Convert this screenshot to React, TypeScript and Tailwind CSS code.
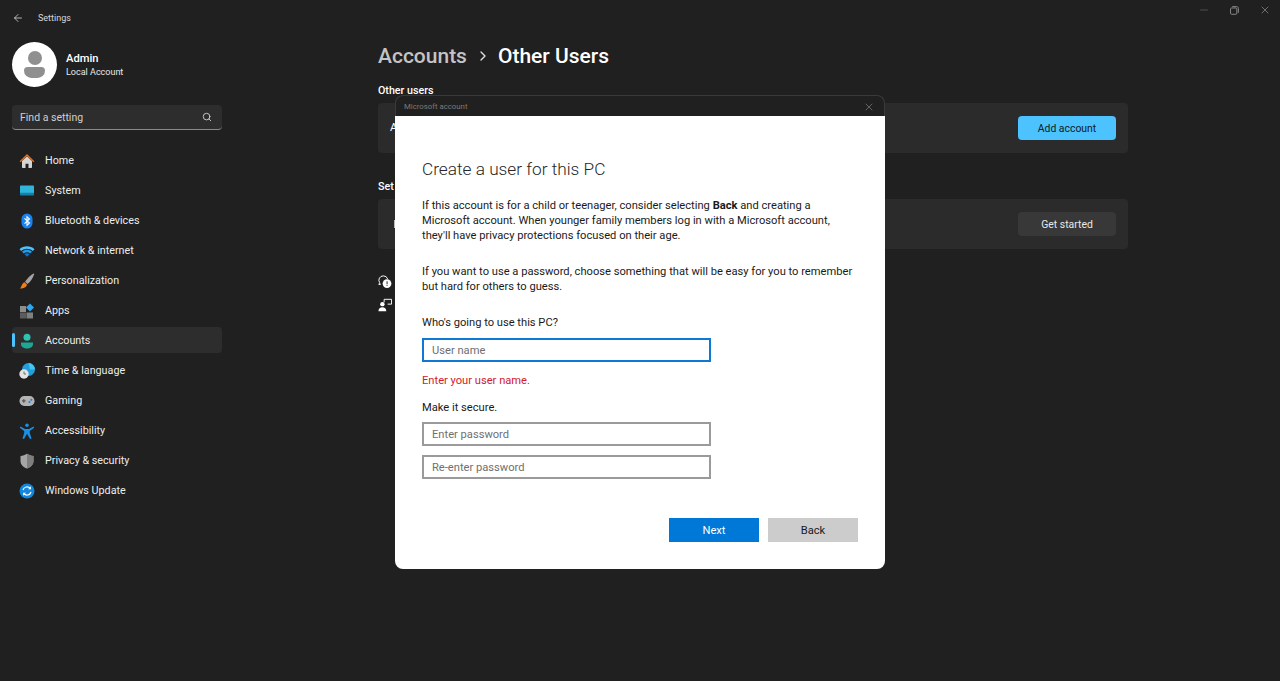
import { ArrowLeft, ChevronRight, Minus, Search, X } from "lucide-react";

function HomeIcon() {
  return (
    <svg viewBox="0 0 16 16" className="h-4 w-4">
      <path d="M3 8v6.200c0 .4.3.8.8.8h2.700v-4.200h3V15h2.700c.5 0 .8-.4.8-.8V8L8 3.200z" fill="#d5d5d5" />
      <path d="M.6 8.300 8 1l7.400 7.300-1 1L8 3 1.600 9.300z" fill="#e0701c" />
    </svg>
  );
}

function SystemIcon() {
  return (
    <svg viewBox="0 0 16 16" className="h-4 w-4">
      <rect x="1" y="2.500" width="14" height="9" rx="0.800" fill="#2fb4dc" />
      <path d="M1 9.800h14v1.700c0 .6-.4 1-1 1H2c-.6 0-1-.4-1-1z" fill="#1a7fa8" />
    </svg>
  );
}

function BluetoothIcon() {
  return (
    <svg viewBox="0 0 16 16" className="h-4 w-4">
      <rect x="2.500" y="0.500" width="11" height="15" rx="5.500" fill="#1683f0" />
      <path d="m5.500 5.300 5 4.700L8 12.300V3.700l2.500 2.300-5 4.700" fill="none" stroke="#fff" strokeWidth="1.100" />
    </svg>
  );
}

function NetworkIcon() {
  return (
    <svg viewBox="0 0 16 16" className="h-4 w-4">
      <path d="M.5 6.200C4.600 2.400 11.400 2.400 15.500 6.200L13.800 8C10.500 5 5.500 5 2.200 8z" fill="#4cc2ff" />
      <path d="M3 8.700c2.800-2.500 7.200-2.500 10 0l-1.800 1.800c-1.800-1.600-4.600-1.600-6.400 0z" fill="#1f9be8" />
      <path d="M5.500 11.200c1.400-1.200 3.600-1.200 5 0L8 13.800z" fill="#0f74c9" />
    </svg>
  );
}

function BrushIcon() {
  return (
    <svg viewBox="0 0 16 16" className="h-4 w-4">
      <path d="M14.500.5c.5 0 .8.400.6.900C13.800 5 11.300 9 8.500 11L6 8.800C8 5.800 11.500 2 14.500.5z" fill="#a3a3a3" />
      <path d="M5.500 9.300 8 11.500c-.4 2.700-3.300 4-7 4 1.700-1.300 1.300-4.800 4.500-6.200z" fill="#ef7d1a" />
    </svg>
  );
}

function AppsIcon() {
  return (
    <svg viewBox="0 0 16 16" className="h-4 w-4">
      <rect x="1" y="3" width="6" height="6" fill="#8d8d8d" />
      <rect x="1" y="9.500" width="6" height="6" fill="#5c5c5c" />
      <rect x="7.500" y="9.500" width="6.500" height="6" fill="#808080" />
      <path d="m11 .5 4 4-4 4-4-4z" fill="#2ea6f0" />
    </svg>
  );
}

function AccountsIcon() {
  return (
    <svg viewBox="0 0 16 16" className="h-4 w-4">
      <circle cx="8" cy="4.200" r="3.500" fill="#2cc4b0" />
      <path d="M2 9.500h12v1.500c0 3-3 4.500-6 4.500S2 14 2 11z" fill="#1da896" />
    </svg>
  );
}

function TimeIcon() {
  return (
    <svg viewBox="0 0 16 16" className="h-4 w-4">
      <circle cx="9.500" cy="6.500" r="6.500" fill="#1f9fe0" />
      <path d="M9.500 0a6.500 6.500 0 0 1 6.500 6.500h-5z" fill="#47c4f0" />
      <circle cx="5" cy="11" r="4.700" fill="#e2e2e2" />
      <path d="M5 8.500V11h2" fill="none" stroke="#555" strokeWidth="0.800" />
    </svg>
  );
}

function GamingIcon() {
  return (
    <svg viewBox="0 0 16 16" className="h-4 w-4">
      <rect x="0.500" y="3" width="15" height="10" rx="4.800" fill="#b4b4b4" />
      <rect x="3" y="7.300" width="3.600" height="1.200" fill="#555" />
      <rect x="4.200" y="6.100" width="1.200" height="3.600" fill="#555" />
      <circle cx="10.500" cy="9" r="1.100" fill="#1f86dc" />
      <circle cx="12.300" cy="6.800" r="1.100" fill="#1f86dc" />
    </svg>
  );
}

function AccessibilityIcon() {
  return (
    <svg viewBox="0 0 16 16" className="h-4 w-4">
      <circle cx="8" cy="2.300" r="1.800" fill="#1a8fe3" />
      <path d="M1.500 3.500 6 6h4l4.500-2.500.7 1.200L10.800 8v2l1.700 5.500-1.500.5L8 10.800 5 16l-1.500-.5L5.200 10V8L.8 4.700z" fill="#1a8fe3" />
    </svg>
  );
}

function PrivacyIcon() {
  return (
    <svg viewBox="0 0 16 16" className="h-4 w-4">
      <path d="M8 .7c2 1.300 4 2 6.500 2.200V8c0 3.600-2.500 6-6.500 7.500C4 14 1.500 11.600 1.500 8V2.900C4 2.700 6 2 8 .7z" fill="#a6a6a6" />
      <path d="M8 .7c2 1.300 4 2 6.500 2.200V8c0 3.600-2.500 6-6.500 7.500z" fill="#7e7e7e" />
    </svg>
  );
}

function UpdateIcon() {
  return (
    <svg viewBox="0 0 16 16" className="h-4 w-4">
      <circle cx="8" cy="8" r="7.500" fill="#1287e0" />
      <path d="M4 7a4.200 4.200 0 0 1 7.300-1.500M12 9a4.200 4.200 0 0 1-7.300 1.500" fill="none" stroke="#fff" strokeWidth="1.200" />
      <path d="M12 3.300v3h-3zM4 12.700v-3h3z" fill="#fff" />
    </svg>
  );
}

function HelpIcon() {
  return (
    <svg viewBox="0 0 16 16" className="h-[14px] w-[14px]">
      <path d="M6 1a5 5 0 0 0-4.200 7.700L1 11l2.400-.7" fill="none" stroke="#fff" strokeWidth="1.100" />
      <path d="M6 1a5 5 0 0 1 5 3.500" fill="none" stroke="#fff" strokeWidth="1.100" />
      <circle cx="10.300" cy="9.800" r="5" fill="#fff" />
      <rect x="9.800" y="7.200" width="1.100" height="3.300" fill="#202020" />
      <rect x="9.800" y="11.300" width="1.100" height="1.100" fill="#202020" />
    </svg>
  );
}

function FeedbackIcon() {
  return (
    <svg viewBox="0 0 16 16" className="h-[14px] w-[14px]">
      <circle cx="5" cy="7" r="2.500" fill="#fff" />
      <path d="M0.500 15c0-3 2-4.500 4.500-4.500S9.500 12 9.500 15z" fill="#fff" />
      <path d="M7 5V1.500h8.500V7H11" fill="none" stroke="#fff" strokeWidth="1.100" />
    </svg>
  );
}

function RestoreIcon() {
  return (
    <svg viewBox="0 0 10 10" className="h-[9px] w-[9px]">
      <rect x="0.600" y="2.200" width="7" height="7" rx="1.200" fill="none" stroke="#8a8a8a" strokeWidth="1.100" />
      <path d="M2.500.7h5c1 0 1.800.8 1.800 1.800v5" fill="none" stroke="#8a8a8a" strokeWidth="1.100" />
    </svg>
  );
}

const navItems = [
  { label: "Home", icon: <HomeIcon /> },
  { label: "System", icon: <SystemIcon /> },
  { label: "Bluetooth & devices", icon: <BluetoothIcon /> },
  { label: "Network & internet", icon: <NetworkIcon /> },
  { label: "Personalization", icon: <BrushIcon /> },
  { label: "Apps", icon: <AppsIcon /> },
  { label: "Accounts", icon: <AccountsIcon />, active: true },
  { label: "Time & language", icon: <TimeIcon /> },
  { label: "Gaming", icon: <GamingIcon /> },
  { label: "Accessibility", icon: <AccessibilityIcon /> },
  { label: "Privacy & security", icon: <PrivacyIcon /> },
  { label: "Windows Update", icon: <UpdateIcon /> },
];

function Sidebar() {
  return (
    <aside className="w-[234px] shrink-0 px-3">
      {/* Profile */}
      <div className="mt-[6px] flex items-center gap-[9px]">
        <div className="flex h-[45px] w-[45px] flex-col items-center justify-center gap-[2px] rounded-full bg-white">
          <div className="h-[14px] w-[14px] rounded-full bg-[#8f8f8f]" />
          <div className="h-[11px] w-[21px] rounded-b-[10px] rounded-t-[5px] bg-[#8f8f8f]" />
        </div>
        <div>
          <div className="pt-px text-[11.200px] leading-[14px] font-medium text-white">Admin</div>
          <div className="text-[9px] leading-[13px] text-[#e8e8e8]">Local Account</div>
        </div>
      </div>

      {/* Search */}
      <div className="mt-[18px] flex h-[25px] w-[210px] items-center justify-between rounded-[4px] border-b border-b-[#8a8a8a] bg-[#2d2d2d] pr-[10px] pl-2">
        <span className="pt-px text-[10.500px] text-[#cfcfcf]">Find a setting</span>
        <Search className="h-[10px] w-[10px] text-[#cfcfcf]" strokeWidth={2.200} />
      </div>

      {/* Nav */}
      <nav className="mt-[15px] flex flex-col">
        {navItems.map((item) => (
          <div
            key={item.label}
            className={`relative my-[2px] flex h-[26px] items-center gap-[10px] rounded-[4px] pt-[2px] pl-[7px] ${item.active ? "bg-[#2d2d2d]" : ""}`}
          >
            {item.active && <div className="absolute top-[6px] left-0 h-[14px] w-[3px] rounded-full bg-[#4cc2ff]" />}
            <span className="flex w-4 justify-center">{item.icon}</span>
            <span className="pt-px text-[10.750px] text-[#ececec]">{item.label}</span>
          </div>
        ))}
      </nav>
    </aside>
  );
}

function InputBox({ placeholder, focused }: { placeholder: string; focused?: boolean }) {
  return (
    <div
      className={`flex h-6 w-[289px] items-center border-2 pt-[2px] pl-2 text-[11.150px] text-[#6f6f6f] ${focused ? "border-[#0f78d4]" : "border-[#9a9a9a]"}`}
    >
      {placeholder}
    </div>
  );
}

function AccountDialog() {
  return (
    <div className="absolute top-[95px] left-[395px] w-[490px]">
      <div className="flex h-[21px] items-center justify-between rounded-t-[8px] border-x border-t border-[#3a3a3a] bg-[#202020] pt-px pr-[9px] pl-2">
        <span className="text-[7.800px] text-[#7a7a7a]">Microsoft account</span>
        <X className="h-3 w-3 text-[#8a8a8a]" strokeWidth={1.300} />
      </div>
      <div className="h-[453px] rounded-b-[8px] bg-white pt-[41px] pr-[27px] pl-[27px] text-[#1a1a1a]">
        <h2 className="text-[17.250px] leading-6 font-light text-[#262626]">Create a user for this PC</h2>
        <p className="mt-[17px] text-[11.150px] leading-[15px]">
          If this account is for a child or teenager, consider selecting <b>Back</b> and creating a
          <br />
          Microsoft account. When younger family members log in with a Microsoft account,
          <br />
          they'll have privacy protections focused on their age.
        </p>
        <p className="mt-[21px] text-[11.150px] leading-[15px]">
          If you want to use a password, choose something that will be easy for you to remember
          <br />
          but hard for others to guess.
        </p>
        <div className="mt-[21px] text-[11.150px] leading-[15px]">Who's going to use this PC?</div>
        <div className="mt-2">
          <InputBox placeholder="User name" focused />
        </div>
        <div className="mt-[11px] text-[11.150px] leading-[15px] text-[#d1202c]">Enter your user name.</div>
        <div className="mt-3 text-[11.150px] leading-[15px]">Make it secure.</div>
        <div className="mt-[7px] flex flex-col gap-[9px]">
          <InputBox placeholder="Enter password" />
          <InputBox placeholder="Re-enter password" />
        </div>
        <div className="mt-[39px] flex justify-end gap-[9px]">
          <button className="h-6 w-[90px] bg-[#0078d7] pt-[2px] text-[11.150px] text-white">Next</button>
          <button className="h-6 w-[90px] bg-[#cccccc] pt-[2px] text-[11.150px] text-[#1a1a1a]">Back</button>
        </div>
      </div>
    </div>
  );
}

export default function App() {
  return (
    <div className="relative flex h-[681px] w-[1280px] flex-col overflow-hidden bg-[#202020] font-['Roboto',sans-serif]">
      {/* Title bar */}
      <header className="flex h-[36px] shrink-0 items-center justify-between pr-[9px] pl-[12px]">
        <div className="flex items-center gap-[14px]">
          <ArrowLeft className="h-3 w-3 text-[#e0e0e0]" strokeWidth={1.500} />
          <span className="pt-px text-[9px] text-[#d8d8d8]">Settings</span>
        </div>
        <div className="mb-4 flex items-center gap-5">
          <Minus className="h-3 w-3 text-[#666]" strokeWidth={1.300} />
          <RestoreIcon />
          <X className="h-3 w-3 text-[#9a9a9a]" strokeWidth={1.300} />
        </div>
      </header>

      <div className="flex min-h-0 flex-1">
        <Sidebar />

        <main className="pl-[144px]">
          <h1 className="flex h-[40px] items-center text-[21px] leading-7 font-medium text-white">
            <span className="text-[#c4c4c4]">Accounts</span>
            <ChevronRight className="mr-[7px] ml-[8px] h-[16px] w-[16px] text-[#e0e0e0]" strokeWidth={2} />
            <span>Other Users</span>
          </h1>

          <div className="mt-[7px] text-[10.700px] leading-4 font-medium text-white">Other users</div>
          <section className="mt-[4px] flex h-[50px] w-[750px] items-center justify-between rounded-[4px] bg-[#2b2b2b] pr-3 pl-3">
            <span className="text-[11.300px] text-white">A</span>
            <button className="h-6 w-[98px] rounded-[4px] bg-[#4cc2ff] pt-px text-[10.400px] text-[#0d1a22]">Add account</button>
          </section>

          <div className="mt-[26px] text-[10.700px] leading-4 font-medium text-white">Set</div>
          <section className="mt-[4px] flex h-[50px] w-[750px] items-center justify-between rounded-[4px] bg-[#2b2b2b] pr-3 pl-[16px]">
            <div className="h-2 w-[2px] bg-[#bdbdbd]" />
            <button className="h-6 w-[98px] rounded-[4px] bg-[#383838] pt-px text-[10.400px] text-[#e8e8e8]">Get started</button>
          </section>

          <div className="mt-[26px] flex flex-col gap-[9px]">
            <HelpIcon />
            <FeedbackIcon />
          </div>
        </main>
      </div>

      <AccountDialog />
    </div>
  );
}
